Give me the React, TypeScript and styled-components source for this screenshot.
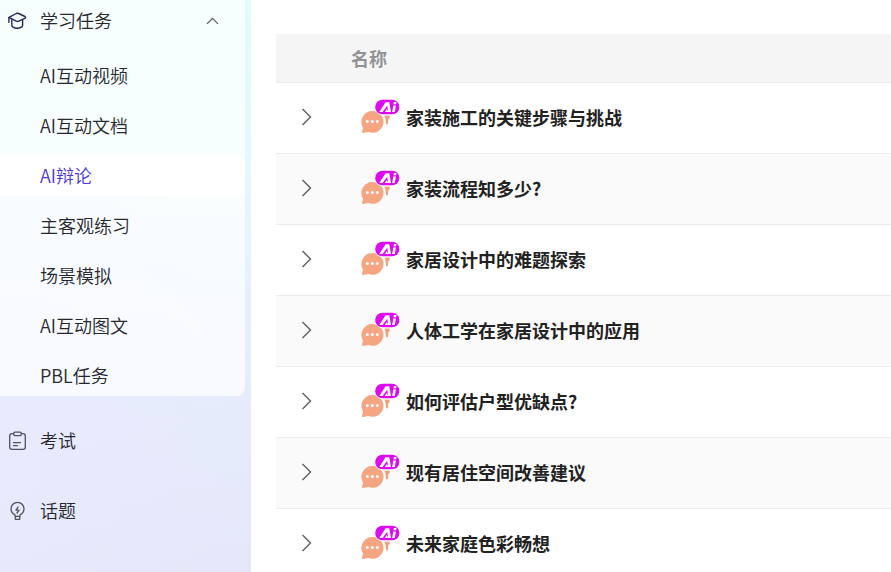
import React from "react";
import styled, { createGlobalStyle } from "styled-components";

const GlobalStyle = createGlobalStyle`
  * { box-sizing: border-box; }
  body {
    margin: 0;
    background: #fff;
    color: #26282e;
    font-family: "Noto Sans CJK SC", sans-serif;
    font-size: 18px;
    line-height: 24px;
  }
`;

const Page = styled.div`
  display: grid;
  grid-template-columns: 251px minmax(0, 1fr);
  min-height: 100vh;
  overflow: hidden;
`;

const Sidebar = styled.nav`
  padding-right: 6px;
  background:
    radial-gradient(circle at 0 80%, rgba(234, 234, 254, 0.7), rgba(230, 234, 252, 0) 60%),
    linear-gradient(180deg, #e2fcfa 0%, #e4f9fb 28%, #e5f0fc 50%, #e5ebfb 72%, #e3e7f8 100%);
`;

const Group = styled.section`
  background: rgba(255, 255, 255, 0.72);
  border-radius: 0 0 8px 0;
`;

const GroupToggle = styled.button`
  display: flex;
  align-items: center;
  gap: 13px;
  width: 100%;
  height: 42px;
  padding: 0 26px 0 8px;
  border: 0;
  background: none;
  color: inherit;
  font: inherit;
  font-weight: 350;
  text-align: left;
  cursor: pointer;
`;

const Label = styled.span`
  flex: 1;
  padding-bottom: 2px;
`;

const Items = styled.ul`
  display: grid;
  gap: 10px;
  margin: 0;
  padding: 14px 0 0;
  list-style: none;
`;

const ItemLink = styled.a<{ $active?: boolean }>`
  display: flex;
  align-items: center;
  height: 40px;
  padding-left: 40px;
  border-radius: 0 8px 8px 0;
  background: ${(p) => (p.$active ? "#fff" : "transparent")};
  color: ${(p) => (p.$active ? "#4a35d6" : "inherit")};
  font-weight: 350;
  text-decoration: none;
`;

const TopLink = styled.a`
  display: flex;
  align-items: center;
  gap: 13px;
  height: 50px;
  margin: 20px 0;
  padding-left: 8px;
  color: inherit;
  font-weight: 350;
  text-decoration: none;
`;

const Main = styled.main`
  padding: 34px 0 0 25px;
`;

const Table = styled.table`
  width: 100%;
  table-layout: fixed;
  border-spacing: 0;
`;

const ExpandHead = styled.th`
  width: 75px;
  padding: 0;
  border-bottom: 1px solid #ebeef0;
`;

const NameHead = styled.th`
  height: 49px;
  padding: 0;
  border-bottom: 1px solid #ebeef0;
  color: #919295;
  font-weight: 700;
  text-align: left;
`;

const HeadRow = styled.tr`
  background: #f5f5f5;
`;

const Row = styled.tr`
  height: 71px;
  &:nth-child(even) { background: #fafafa; }
`;

const Cell = styled.td`
  padding: 0 0 2px;
  border-bottom: 1px solid #ebeef0;
  vertical-align: middle;
`;

const ExpandButton = styled.button`
  display: block;
  margin-left: 22px;
  padding: 0;
  border: 0;
  background: none;
  color: #5c5e63;
  cursor: pointer;
`;

const Name = styled.div`
  display: flex;
  align-items: center;
  gap: 6px;
  padding-left: 10px;
  color: #222;
  font-weight: 700;
  white-space: nowrap;
`;

const Svg = styled.svg`
  display: block;
  flex: none;
`;

const CapIcon = () => (
  <Svg width="19" height="18" viewBox="0 0 19 18" fill="none" stroke="#25255a" strokeWidth="1.4" strokeLinejoin="round" strokeLinecap="round" aria-hidden="true">
    <path d="M1 5.4 8.3 1.500q1.200-.5 2.400 0l6.200 3q1.500.9 0 1.800l-6.200 2.900q-1.200.5-2.400 0L1.400 5.600" />
    <path d="M.9 5.600v4.600M3.800 7.800v5.500q0 1 .8 1.500 4.600 3 9.200 0 .8-.5.800-1.500V7.800" />
  </Svg>
);

const ClipIcon = () => (
  <Svg width="19" height="20" viewBox="0 0 19 20" fill="none" stroke="#50525c" strokeWidth="1.3" strokeLinejoin="round" strokeLinecap="round" aria-hidden="true">
    <path d="M5.500 2.600H4Q1.700 2.600 1.700 5v11q0 2.400 2.300 2.400h11q2.300 0 2.300-2.400V5q0-2.400-2.300-2.400h-1.500" />
    <rect x="5.700" y="1.200" width="7.600" height="3.400" rx="1.300" />
    <path d="M5.500 11.700h7M5.500 14.700h4" />
  </Svg>
);

const BulbIcon = () => (
  <Svg width="19" height="20" viewBox="0 0 19 20" fill="none" stroke="#50525c" strokeWidth="1.3" strokeLinejoin="round" strokeLinecap="round" aria-hidden="true">
    <path d="M7 15.400v-1.500Q3 12 3 7.800a6.500 6.500 0 0 1 13 0q0 4.200-4 6.100v1.500ZM7.300 18.300h4.400M7.300 15.600v2.500M11.700 15.600v2.500" />
    <path d="M10 6 8 9.200h3L9 12" />
  </Svg>
);

const ChevronUp = () => (
  <Svg width="13" height="8" viewBox="0 0 13 8" fill="none" stroke="#55575c" strokeWidth="1.2" aria-hidden="true">
    <path d="m1 6.800 5.500-5.500L12 6.800" />
  </Svg>
);

const ChevronRight = () => (
  <Svg width="16" height="20" viewBox="0 0 16 20" fill="none" stroke="currentColor" strokeWidth="1.4" aria-hidden="true">
    <path d="m4.500 2 8 8-8 8" />
  </Svg>
);

const DebateIcon = () => (
  <Svg width="39" height="36" viewBox="0 0 39 36" aria-hidden="true">
    <path d="M23.500 16.500h5.200v2.700l-1.500 1-.3 5h-1.800l-.6-5.500Z" fill="#f0a07c" />
    <path d="M11.300 12A10.900 10.900 0 1 1 7.500 33L1.800 33.900q-1.200 0-.8-1.200l1-4.200A10.900 10.900 0 0 1 11.300 12Z" fill="#f6a583" />
    <g fill="#fff">
      <circle cx="6.300" cy="22.500" r="1.500" />
      <circle cx="11.300" cy="22.500" r="1.500" />
      <circle cx="16.300" cy="22.500" r="1.500" />
    </g>
    <rect x="13.400" y="0" width="25.600" height="16.200" rx="8.100" fill="#fff" />
    <rect x="14.200" y=".7" width="24.200" height="14.600" rx="7.300" fill="#dc0af0" />
    <path d="M18.300 12.900 24.600 3.200h3.700l1.700 9.700h-2.800l-1-6.200-4.600 6.200Z" fill="#fff" />
    <path d="m23.800 12.900 2-2.800 1.400 2.800Z" fill="#fff" />
    <path d="M32.300 6.400h2.600l-1.100 6.500h-2.600ZM32.900 3h2.600l-.4 2.200h-2.600Z" fill="#fff" />
  </Svg>
);

const tasks = ["AI互动视频", "AI互动文档", "AI辩论", "主客观练习", "场景模拟", "AI互动图文", "PBL任务"];

const debates = [
  "家装施工的关键步骤与挑战",
  "家装流程知多少?",
  "家居设计中的难题探索",
  "人体工学在家居设计中的应用",
  "如何评估户型优缺点?",
  "现有居住空间改善建议",
  "未来家庭色彩畅想",
];

export default function App() {
  return (
    <>
      <GlobalStyle />
      <Page>
        <Sidebar>
          <Group>
            <GroupToggle type="button" aria-expanded="true">
              <CapIcon />
              <Label>学习任务</Label>
              <ChevronUp />
            </GroupToggle>
            <Items>
              {tasks.map((task) => (
                <li key={task}>
                  <ItemLink href="#" $active={task === "AI辩论"}>
                    <Label>{task}</Label>
                  </ItemLink>
                </li>
              ))}
            </Items>
          </Group>
          <TopLink href="#"><ClipIcon /><Label>考试</Label></TopLink>
          <TopLink href="#"><BulbIcon /><Label>话题</Label></TopLink>
        </Sidebar>
        <Main>
          <Table>
            <thead>
              <HeadRow>
                <ExpandHead aria-label="展开" />
                <NameHead scope="col">名称</NameHead>
              </HeadRow>
            </thead>
            <tbody>
              {debates.map((name) => (
                <Row key={name}>
                  <Cell>
                    <ExpandButton type="button" aria-label={name}><ChevronRight /></ExpandButton>
                  </Cell>
                  <Cell>
                    <Name><DebateIcon />{name}</Name>
                  </Cell>
                </Row>
              ))}
            </tbody>
          </Table>
        </Main>
      </Page>
    </>
  );
}
